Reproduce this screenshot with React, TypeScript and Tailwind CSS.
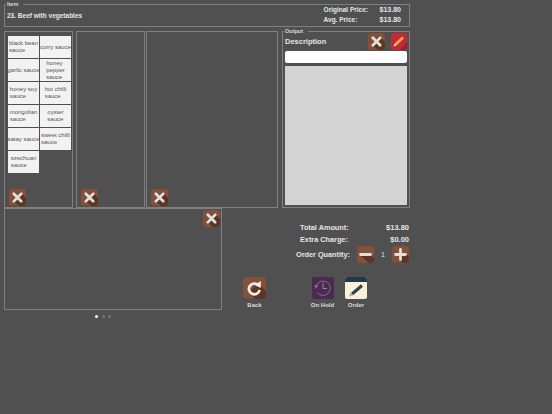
const font = "font-['Liberation_Sans',Arial,sans-serif]";

const sauces = [
  ["black bean", "sauce"],
  ["curry sauce"],
  ["garlic sauce"],
  ["honey", "pepper", "sauce"],
  ["honey soy", "sauce"],
  ["hot chilli", "sauce"],
  ["mongolian", "sauce"],
  ["oyster", "sauce"],
  ["satay sauce"],
  ["sweet chilli", "sauce"],
  ["szechuan", "sauce"],
];

// rounded brown tile with the long diagonal shadow under the glyph
const BrownTile = ({ glyph, shadow }: { glyph: string; shadow: string }) => (
  <button className="block w-[17px] h-[17px] shrink-0">
    <svg width="17" height="17" viewBox="0 0 17 17">
      <defs>
        <clipPath id="tile">
          <rect width="17" height="17" rx="3.5" />
        </clipPath>
      </defs>
      <g clipPath="url(#tile)">
        <rect width="17" height="17" fill="#85503a" />
        <path d={shadow} fill="#5c3622" />
      </g>
      <path d={glyph} stroke="#e2dedb" strokeWidth="2.8" strokeLinecap="round" fill="none" />
    </svg>
  </button>
);

const CloseButton = () => (
  <BrownTile glyph="M4.8 4.8 L12.2 12.2 M12.2 4.8 L4.8 12.2" shadow="M11 3 L17 9 V17 H10 L3 11 Z" />
);

const QtyButton = ({ plus }: { plus?: boolean }) => (
  <BrownTile
    glyph={plus ? "M8.5 3.5 V13.5 M3.5 8.5 H13.5" : "M3.5 8.5 H13.5"}
    shadow={plus ? "M13 7 L17 11 V17 H11 L7 13 Z" : "M13 8 L17 12 V17 H12 L4 10 Z"}
  />
);

const Legend = ({ children }: { children: string }) => (
  <span className="absolute left-[1px] top-[-4px] bg-[#505050] pl-[1px] pr-[5px] text-[5.5px] leading-[6px] font-bold text-[#d8d8d8]">
    {children}
  </span>
);

const Panel = ({ className }: { className: string }) => (
  <div className={`border border-[#808080] pl-[4px] flex flex-col justify-end pb-[1px] ${className}`}>
    <CloseButton />
  </div>
);

export default function App() {
  return (
    <div className={`${font} w-[552px] h-[414px] bg-[#505050] overflow-hidden pt-[4px] pl-[4px]`}>
      {/* Item header */}
      <div className="relative w-[406px] h-[23px] border border-[#808080] pl-[2px] pr-[8px] flex items-center justify-between">
        <Legend>Item</Legend>
        <span className="text-[6.5px] font-bold text-[#e6e6e6] mt-[1px]">23. Beef with vegetables</span>
        <div className="flex flex-col gap-[3px] mb-[2px] text-[6.5px] leading-[7px] font-bold text-[#e6e6e6]">
          <div className="flex"><span className="w-[56px]">Original Price:</span><span className="text-[7px]">$13.80</span></div>
          <div className="flex"><span className="w-[56px]">Avg. Price:</span><span className="text-[7px]">$13.80</span></div>
        </div>
      </div>

      {/* Option panels and output */}
      <div className="flex mt-[4px] h-[177px]">
        <div className="w-[69px] border border-[#808080] flex flex-col justify-between pl-[3px] pt-[4px] pb-[1px]">
          <div className="grid grid-cols-[31px_31px] auto-rows-[22px] gap-[1px]">
            {sauces.map((lines) => (
              <button
                key={lines.join(" ")}
                className="bg-[#f2f2f2] text-[#555555] text-[6px] leading-[7px] flex items-center justify-center"
              >
                <span className="text-left whitespace-nowrap">
                  {lines.map((l) => (
                    <div key={l}>{l}</div>
                  ))}
                </span>
              </button>
            ))}
          </div>
          <div className="ml-[1px]">
            <CloseButton />
          </div>
        </div>
        <Panel className="w-[69px] ml-[3px]" />
        <Panel className="w-[132px] ml-[1px]" />

        {/* Output */}
        <div className="relative w-[128px] ml-[4px] border border-[#808080] pl-[2px] pt-[1px] flex flex-col">
          <Legend>Output</Legend>
          <div className="flex items-center h-[17px] w-[122px]">
            <span className="text-[7.5px] font-bold text-[#e6e6e6] flex-1">Description</span>
            <CloseButton />
            <button className="block ml-[6px] w-[16px] h-[17px] rounded-[3px] bg-[#c22a3a]">
              <svg width="16" height="17" viewBox="0 0 16 17">
                <path d="M9 17 L16 9 V14 Q16 17 13 17 Z" fill="#9c1f2e" />
                <path d="M4.5 11.5 L12 4.5" stroke="#f2a93b" strokeWidth="2.8" />
                <path d="M2.6 13.6 L3.4 10.6 L5.6 12.8 Z" fill="#f3dfc0" />
              </svg>
            </button>
          </div>
          <div className="mt-[1px] h-[12px] w-[122px] bg-white rounded-[2px]" />
          <div className="mt-[3px] h-[139px] w-[122px] bg-[#d4d4d4]" />
        </div>
      </div>

      {/* Bottom */}
      <div className="flex">
        <div className="w-[218px] shrink-0">
          <div className="h-[102px] border border-[#808080] flex justify-end pt-[1px] pr-[1px]">
            <CloseButton />
          </div>
          <div className="mt-[5px] ml-[91px] flex gap-[3.5px]">
            <span className="w-[3px] h-[3px] rounded-full bg-white" />
            <span className="w-[3px] h-[3px] rounded-full bg-[#777777]" />
            <span className="w-[3px] h-[3px] rounded-full bg-[#777777]" />
          </div>
        </div>

        <div className="flex-1 text-[#e6e6e6]">
          <div className="ml-[74px] w-[113px] mt-[15px] text-[7.3px] leading-[9px] font-bold">
            <div className="flex justify-between pl-[4px]"><span>Total Amount:</span><span className="text-[7.5px]">$13.80</span></div>
            <div className="flex justify-between pl-[4px] mt-[3px]"><span>Extra Charge:</span><span className="text-[7.5px]">$0.00</span></div>
            <div className="flex items-center mt-[2px] h-[17px]">
              <span className="w-[61px]">Order Quantity:</span>
              <QtyButton />
              <span className="w-[18px] text-center font-normal text-[7px]">1</span>
              <QtyButton plus />
            </div>
          </div>

          <div className="flex mt-[14px] ml-[21px] text-[6px] font-bold text-[#dcdcdc]">
            <div className="w-[23px] flex flex-col items-center">
              <div className="w-[23px] h-[22px] rounded-[4px] bg-[#85503a] overflow-hidden">
                <svg width="23" height="22" viewBox="0 0 23 22" fill="none">
                  <path d="M15 6 L23 14 V22 H12 L6 15 Z" fill="#5c3622" />
                  <path d="M15.5 8.5 A5.4 5.4 0 1 0 16.6 13" stroke="#f0ece8" strokeWidth="2.7" />
                  <path d="M11.5 8 L17.8 4 L17.8 11 Z" fill="#f0ece8" />
                </svg>
              </div>
              <span className="mt-[3px] leading-[7px]">Back</span>
            </div>
            <div className="ml-[45px] w-[23px] flex flex-col items-center">
              <div className="w-[22px] h-[22px] rounded-[2px] bg-[#4b2a52] flex items-center justify-center">
                <svg width="20" height="20" viewBox="0 0 20 20" fill="none">
                  <path d="M3.2 8 A7.2 7.2 0 1 1 4 14.2" stroke="#8d7393" strokeWidth="0.9" />
                  <path d="M1.4 7 L5.4 7.6 L2.8 10.4 Z" fill="#8d7393" />
                  <path d="M10 5 V10.5 H14" stroke="#a890ad" strokeWidth="0.9" />
                </svg>
              </div>
              <span className="mt-[3px] leading-[7px] whitespace-nowrap">On Hold</span>
            </div>
            <div className="ml-[10px] w-[23px] flex flex-col items-center">
              <div className="w-[22px] h-[22px] rounded-[2px] bg-[#f7f1d8] overflow-hidden flex flex-col">
                <div className="h-[5px] shrink-0 bg-[#243a4c]" />
                <svg width="22" height="17" viewBox="0 0 22 17" fill="none">
                  <path d="M7 12 L17 3.5" stroke="#2f4254" strokeWidth="3" />
                  <path d="M4 14.5 L5.4 10.6 L8.4 13.2 Z" fill="#c9a77c" />
                </svg>
              </div>
              <span className="mt-[3px] leading-[7px] ml-[1px]">Order</span>
            </div>
          </div>
        </div>
      </div>
    </div>
  );
}
